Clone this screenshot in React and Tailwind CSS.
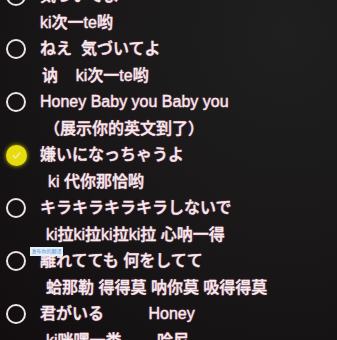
import React from "react";

const items = [
    { main: "気づいてよ", sub: "ki次一te哟", subPad: "pl-[40px]" },
    { main: "ねえ  気づいてよ", sub: "讷    ki次一te哟", subPad: "pl-[42px]" },
    { main: "Honey Baby you Baby you", sub: "（展示你的英文到了）", subPad: "pl-[44px]" },
    { main: "嫌いになっちゃうよ", sub: "ki 代你那恰哟", subPad: "pl-[48px]", checked: true },
    { main: "キラキラキラキラしないで", sub: "ki拉ki拉ki拉ki拉 心呐一得", subPad: "pl-[46px]" },
    { main: "離れてても 何をしてて", sub: "蛤那勒 得得莫 呐你莫 吸得得莫", subPad: "pl-[46px]", badge: true },
    { main: "君がいる          Honey", sub: "ki咪嘿一类        哈尼", subPad: "pl-[46px]" },
];

const Circle = ({ checked }) => {
    if (checked) {
        return (
            <div className="w-[21px] h-[21px] rounded-full bg-[#e6dc10] flex items-center justify-center shadow-[0_0_4px_#c8c000]">
                <svg width="11" height="11" viewBox="0 0 12 12">
                    <path d="M2.5 6.2 L5 8.6 L9.6 3.2" fill="none" stroke="#f4f0c8" strokeWidth="1.4" strokeLinecap="round" strokeLinejoin="round" />
                </svg>
            </div>
        );
    }
    return <div className="w-[20px] h-[20px] rounded-full border-[2.5px] border-[#eee2e6]" />;
};

const App = () => {
    return (
        <div className="w-[337px] h-[340px] overflow-hidden bg-[radial-gradient(ellipse_at_85%_10%,#1f1f1f_0%,#1a1819_45%,#120e10_100%)] text-[#f6eaef] [font-family:'Liberation_Sans','Noto_Sans_CJK_JP',sans-serif]">
            <div className="-mt-[17px] flex flex-col">
                {items.map((item, i) => (
                    <div key={i} className="flex flex-col">
                        <div className="relative flex items-center h-[26.5px]">
                            <div className="w-[40px] flex">
                                <div className="ml-[6px]">
                                    <Circle checked={item.checked} />
                                </div>
                            </div>
                            <span className="text-[16px] font-medium whitespace-pre [-webkit-text-stroke:0.35px_#f6eaef] [text-shadow:0_0_2px_#a04868]">{item.main}</span>
                            {item.badge && (
                                <div className="absolute left-[30px] top-[-1px] w-[33px] h-[9px] bg-[#e9f1f8] flex items-center justify-center">
                                    <span className="text-[5px] leading-none text-[#4a8fd8]">发布你的翻译</span>
                                </div>
                            )}
                        </div>
                        <div className={`flex items-center h-[26.5px] ${item.subPad}`}>
                            <span className="text-[16px] font-medium whitespace-pre [-webkit-text-stroke:0.35px_#f6eaef] [text-shadow:0_0_2px_#a04868]">{item.sub}</span>
                        </div>
                    </div>
                ))}
            </div>
        </div>
    );
};

export default App;
